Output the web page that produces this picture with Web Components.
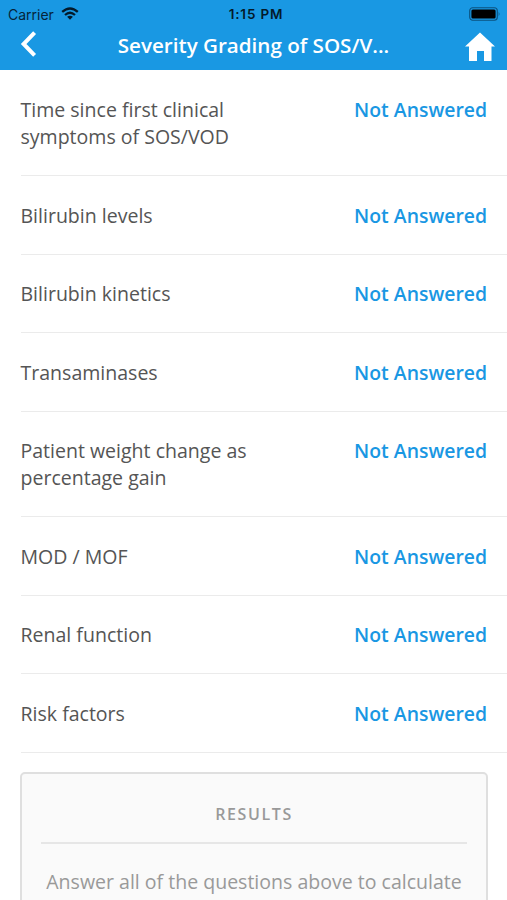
<!DOCTYPE html>
<html lang="en">
<head>
<meta charset="utf-8">
<title>Severity Grading</title>
<style>
html,body{margin:0;height:100%;overflow:hidden;background:#fff}
body{font-family:"Open Sans","Noto Sans",sans-serif}
</style>
</head>
<body>
<grading-screen></grading-screen>
<script>
const define = (name, html) => customElements.define(name, class extends HTMLElement {
  constructor() {
    super();
    this.attachShadow({mode: 'open'}).innerHTML = html;
  }
});

define('status-bar', `
<style>
:host{display:grid;grid-template-columns:1fr auto 1fr;align-items:center;height:27px;padding:0 6px 0 8px;color:#06243a;font-family:Inter,"Liberation Sans",sans-serif;font-size:14px;line-height:27px}
.left{display:flex;align-items:center;gap:7px}
.left svg{margin-top:-1px}
.time{font-weight:600;font-size:13.5px;letter-spacing:.85px;color:#031a2b;padding-top:1px;margin-right:-3px}
.right{display:flex;justify-content:flex-end}
svg{display:block}
</style>
<div class="left"><span>Carrier</span>
<svg width="18" height="13" viewBox="0 0 18 13" fill="none" stroke="#031a2b" stroke-width="2.3"><path d="M1.2 4.9Q9-2 16.8 4.9M4 8Q9 3.6 14 8"/><path d="M9 12.7L6.1 9.8Q9 7.6 11.9 9.8Z" fill="#031a2b" stroke="none"/></svg></div>
<span class="time">1:15 PM</span>
<div class="right"><svg width="32" height="14" viewBox="0 0 32 14"><rect x=".7" y=".7" width="27.6" height="12.6" rx="3" fill="none" stroke="#0b517f" stroke-width="1.1"/><rect x="2.4" y="2.4" width="24.2" height="9.2" rx="1.5" fill="#000"/><path d="M29.7 4.7Q31.5 7 29.7 9.3Z" fill="#0b517f"/></svg></div>`);

define('nav-bar', `
<style>
:host{display:grid;grid-template-columns:60px 1fr 60px;align-items:start;height:43px;color:#fff}
.title{text-align:center;font-size:20.6px;font-weight:600;line-height:27px;white-space:nowrap;padding-top:5px}
svg{display:block}
.back{margin:2px 0 0 19px}
.home{margin:5px 0 0 17px}
</style>
<svg class="back" width="20" height="30" viewBox="0 0 20 30" fill="none" stroke="#fff" stroke-width="4"><path d="M15.6 3.6L4.6 15L15.6 26.4"/></svg>
<div class="title"><slot></slot></div>
<svg class="home" width="32" height="30" viewBox="0 0 32 30"><path fill="#fff" d="M16 .5L31 14.5H27.5V29H20V19H13V29H5V14.5H1Z"/></svg>`);

define('question-row', `
<style>
:host{display:flex;justify-content:space-between;box-sizing:border-box;margin-left:20.5px;padding:25.6px 20px 24.95px 0;border-bottom:1.35px solid #ebebeb;font-size:19.55px;line-height:27.04px;color:#555}
.q{width:244px}
.a{font-size:19.4px;font-weight:600;color:#1997e3;white-space:nowrap}
</style>
<div class="q"><slot></slot></div><div class="a"><slot name="answer">Not Answered</slot></div>`);

define('results-card', `
<style>
:host{display:block;box-sizing:border-box;margin:19px 19px 0 20px;height:200px;border:2px solid #dfdfdf;border-radius:5px;background:#fafafa;padding:26px 19px;text-align:center;color:#999}
h2{margin:0;font-size:16px;line-height:28px;font-weight:600;letter-spacing:1.6px;padding-bottom:14px;border-bottom:2px solid #e6e6e6;color:#999}
p{margin:24px -10px 0;font-size:19.55px;line-height:27px}
</style>
<h2>RESULTS</h2><p><slot></slot></p>`);

define('grading-screen', `
<style>
:host{display:block;height:900px;overflow:hidden}
header{background:#1998e3;height:70.3px}
</style>
<header><status-bar></status-bar><nav-bar>Severity Grading of SOS/V...</nav-bar></header>
<main>
<question-row>Time since first clinical symptoms of SOS/VOD</question-row>
<question-row>Bilirubin levels</question-row>
<question-row>Bilirubin kinetics</question-row>
<question-row>Transaminases</question-row>
<question-row>Patient weight change as percentage gain</question-row>
<question-row>MOD / MOF</question-row>
<question-row>Renal function</question-row>
<question-row>Risk factors</question-row>
<results-card>Answer all of the questions above to calculate</results-card>
</main>`);
</script>
</body>
</html>
